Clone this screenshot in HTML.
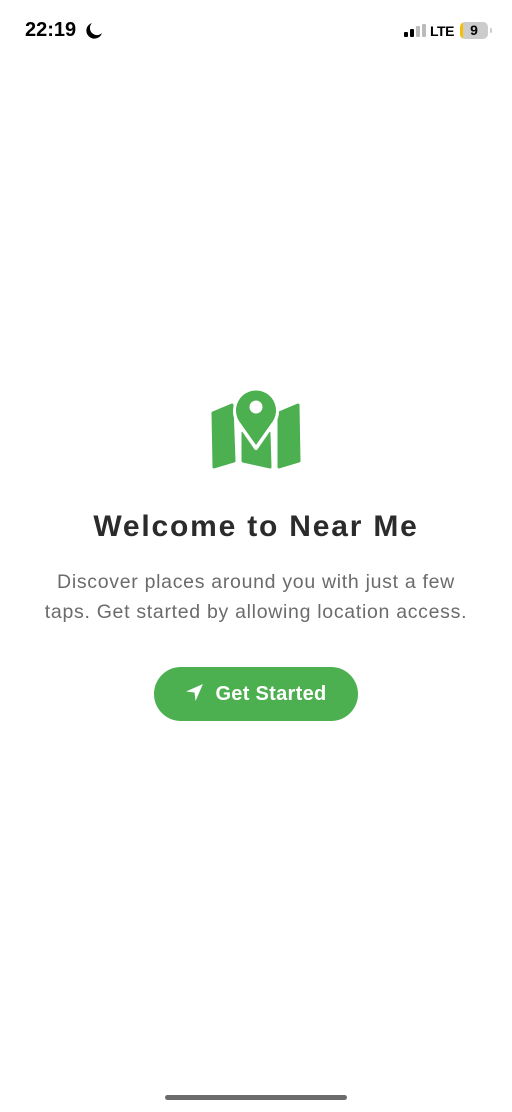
<!DOCTYPE html>
<html><head><meta charset="utf-8"><style>
body{margin:0;width:512px;height:1112px;background:#fff;position:relative;font-family:"Liberation Sans",sans-serif;overflow:hidden}
.t{position:absolute;left:0;width:512px;text-align:center}
</style></head><body>
<div style="position:absolute;left:25px;top:19px;font-weight:bold;font-size:20px;color:#000">22:19</div>
<svg style="position:absolute;left:85px;top:22px" width="18" height="18" viewBox="0 0 18 18"><path d="M7 1 A8 8 0 1 0 17 11 A7 7 0 0 1 7 1Z" fill="#000"/></svg>
<svg style="position:absolute;left:403px;top:24px" width="26" height="14"><rect x="1" y="8" width="4" height="5" rx="1" fill="#000"/><rect x="7" y="5" width="4" height="8" rx="1" fill="#000"/><rect x="13" y="2" width="4" height="11" rx="1" fill="#bbb"/><rect x="19" y="0" width="4" height="13" rx="1" fill="#bbb"/></svg>
<div style="position:absolute;left:430px;top:23px;font-weight:bold;font-size:14px;letter-spacing:-0.5px">LTE</div>
<div style="position:absolute;left:460px;top:22px;width:28px;height:17px;border-radius:5px;background:#ccc;overflow:hidden"><div style="width:3px;height:17px;background:#f5c000"></div><div style="position:absolute;left:0;top:0;width:28px;text-align:center;font-weight:bold;font-size:14px;line-height:17px">9</div></div>
<div style="position:absolute;left:490px;top:28px;width:2px;height:5px;background:#ccc;border-radius:1px"></div>
<svg style="position:absolute;left:0;top:0" width="512" height="500">
<g fill="#4caf50" stroke="#4caf50" stroke-width="3" stroke-linejoin="round">
<path d="M213 413 L232 405 L234 461 L214 467 Z"/>
<path d="M243 433 L256 450 L269 433 L270 467 L243 461 Z"/>
<path d="M279 413 L298 405 L299 461 L279 467 Z"/>
</g>
<path d="M256 448 L238 422 A21 21 0 1 1 274 422 Z" fill="#4caf50" stroke="#fff" stroke-width="4" stroke-linejoin="round"/>
<path d="M256 445 L239 421 A20 20 0 1 1 273 421 Z" fill="#4caf50"/>
<circle cx="256" cy="407" r="6.5" fill="#fff"/>
</svg>
<div class="t" style="top:510px;font-size:30px;font-weight:bold;color:#2b2b2b;letter-spacing:1.8px">Welcome to Near Me</div>
<div class="t" style="top:567px;font-size:19.5px;color:#6b6b6b;line-height:30px;letter-spacing:0.7px">Discover places around you with just a few<br>taps. Get started by allowing location access.</div>
<div style="position:absolute;left:154px;top:667px;width:204px;height:54px;border-radius:27px;background:#4caf50;color:#fff;font-weight:bold;font-size:20px;line-height:54px;text-align:center;letter-spacing:0.3px"><svg style="vertical-align:-2px;margin-right:11px" width="19" height="19" viewBox="0 0 18 18"><path d="M17 1 L1 8 L9 9 L10 17 Z" fill="#fff"/></svg>Get Started</div>
<div style="position:absolute;left:165px;top:1095px;width:182px;height:5px;border-radius:3px;background:#6b6b6b"></div>
</body></html>
